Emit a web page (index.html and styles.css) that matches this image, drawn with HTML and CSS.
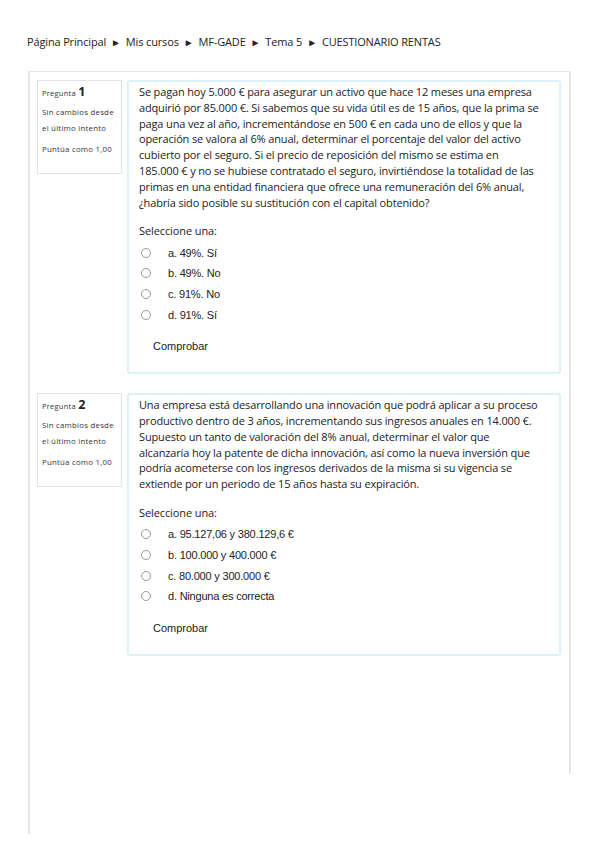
FILE: index.html
```html
<!DOCTYPE html>
<html lang="es">
<head>
<meta charset="utf-8">
<title>CUESTIONARIO RENTAS</title>
<link rel="stylesheet" href="styles.css">
</head>
<body>
<nav class="breadcrumb">
  <span>Página Principal</span><span class="sep">►</span><span>Mis cursos</span><span class="sep">►</span><span>MF-GADE</span><span class="sep">►</span><span>Tema 5</span><span class="sep">►</span><span>CUESTIONARIO RENTAS</span>
</nav>
<div class="page">
  <div class="inner">
    <div class="que">
      <div class="info">
        <div class="qno"><span class="qlabel">Pregunta</span> <span class="num">1</span></div>
        <div class="state">Sin cambios desde el último intento</div>
        <div class="grade">Puntúa como 1,00</div>
      </div>
      <div class="content">
        <p class="qtext">Se pagan hoy 5.000 € para asegurar un activo que hace 12 meses una empresa adquirió por 85.000 €. Si sabemos que su vida útil es de 15 años, que la prima se paga una vez al año, incrementándose en 500 € en cada uno de ellos y que la operación se valora al 6% anual, determinar el porcentaje del valor del activo cubierto por el seguro. Si el precio de reposición del mismo se estima en 185.000 € y no se hubiese contratado el seguro, invirtiéndose la totalidad de las primas en una entidad financiera que ofrece una remuneración del 6% anual, ¿habría sido posible su sustitución con el capital obtenido?</p>
        <div class="prompt">Seleccione una:</div>
        <div class="answers">
          <label class="opt"><span class="radio"></span><span>a. 49%. Sí</span></label>
          <label class="opt"><span class="radio"></span><span>b. 49%. No</span></label>
          <label class="opt"><span class="radio"></span><span>c. 91%. No</span></label>
          <label class="opt"><span class="radio"></span><span>d. 91%. Sí</span></label>
        </div>
        <div class="check">Comprobar</div>
      </div>
    </div>
    <div class="que">
      <div class="info">
        <div class="qno"><span class="qlabel">Pregunta</span> <span class="num">2</span></div>
        <div class="state">Sin cambios desde el último intento</div>
        <div class="grade">Puntúa como 1,00</div>
      </div>
      <div class="content">
        <p class="qtext">Una empresa está desarrollando una innovación que podrá aplicar a su proceso productivo dentro de 3 años, incrementando sus ingresos anuales en 14.000 €. Supuesto un tanto de valoración del 8% anual, determinar el valor que alcanzaría hoy la patente de dicha innovación, así como la nueva inversión que podría acometerse con los ingresos derivados de la misma si su vigencia se extiende por un periodo de 15 años hasta su expiración.</p>
        <div class="prompt">Seleccione una:</div>
        <div class="answers">
          <label class="opt"><span class="radio"></span><span>a. 95.127,06 y 380.129,6 €</span></label>
          <label class="opt"><span class="radio"></span><span>b. 100.000 y 400.000 €</span></label>
          <label class="opt"><span class="radio"></span><span>c. 80.000 y 300.000 €</span></label>
          <label class="opt"><span class="radio"></span><span>d. Ninguna es correcta</span></label>
        </div>
        <div class="check">Comprobar</div>
      </div>
    </div>
  </div>
</div>
</body>
</html>
```
FILE: styles.css
```css
html, body {
  margin: 0;
  padding: 0;
  background: #fff;
}
body {
  font-family: "Open Sans", "Liberation Sans", sans-serif;
  color: #222;
}
.breadcrumb {
  padding: 34px 0 0 27px;
  height: 71px;
  box-sizing: border-box;
  font-size: 11px;
  letter-spacing: -0.15px;
  line-height: 16px;
  color: #222;
}
.breadcrumb .sep {
  font-size: 10px;
  margin: 0 5px 0 5px;
}
.page {
  margin-left: 28px;
  width: 543px;
  height: 763px;
  box-sizing: border-box;
  border-top: 1px solid #e6e6e6;
  border-left: 2px solid #e6e6e6;
}
.inner {
  height: 702px;
  box-sizing: border-box;
  border-right: 2px solid #e6e6e6;
  padding: 8px 8px 0 7px;
  display: flex;
  flex-direction: column;
  gap: 19px;
}
.que {
  display: flex;
  align-items: flex-start;
  gap: 5px;
}
.info {
  width: 85px;
  box-sizing: border-box;
  border: 1px solid #e2e2e2;
  padding: 3px 3px 16px 4px;
  font-size: 7.8px;
  letter-spacing: 0.25px;
  color: #333;
}
.qno {
  line-height: 16px;
  height: 16px;
}
.qlabel {
  font-size: 7.5px;
}
.num {
  font-size: 12.5px;
  font-weight: bold;
  color: #222;
}
.state {
  margin-top: 5px;
  line-height: 15.5px;
}
.grade {
  margin-top: 6px;
  line-height: 15px;
}
.content {
  flex: 1;
  box-sizing: border-box;
  border: 2px solid #dbf0f7;
  border-radius: 3px;
  padding: 2px 19px 18px 10px;
}
.qtext {
  margin: 0;
  font-size: 11px;
  line-height: 15.8px;
  letter-spacing: -0.15px;
  color: #222;
}
.prompt {
  margin-top: 13px;
  font-size: 11px;
  line-height: 16px;
  letter-spacing: -0.1px;
}
.answers {
  display: flex;
  flex-direction: column;
  margin-top: 3px;
}
.opt {
  display: flex;
  align-items: center;
  height: 20.7px;
  font-family: "Liberation Sans", "Open Sans", sans-serif;
  font-size: 11px;
  color: #222;
  letter-spacing: -0.2px;
}
.radio {
  width: 10px;
  height: 10px;
  border: 1px solid #999;
  border-radius: 50%;
  margin: 0 17px 0 2px;
  box-sizing: border-box;
  background: #fff;
}
.check {
  margin: 13px 0 0 14px;
  font-family: "Liberation Sans", "Open Sans", sans-serif;
  font-size: 11px;
  line-height: 16px;
  color: #222;
}
```
